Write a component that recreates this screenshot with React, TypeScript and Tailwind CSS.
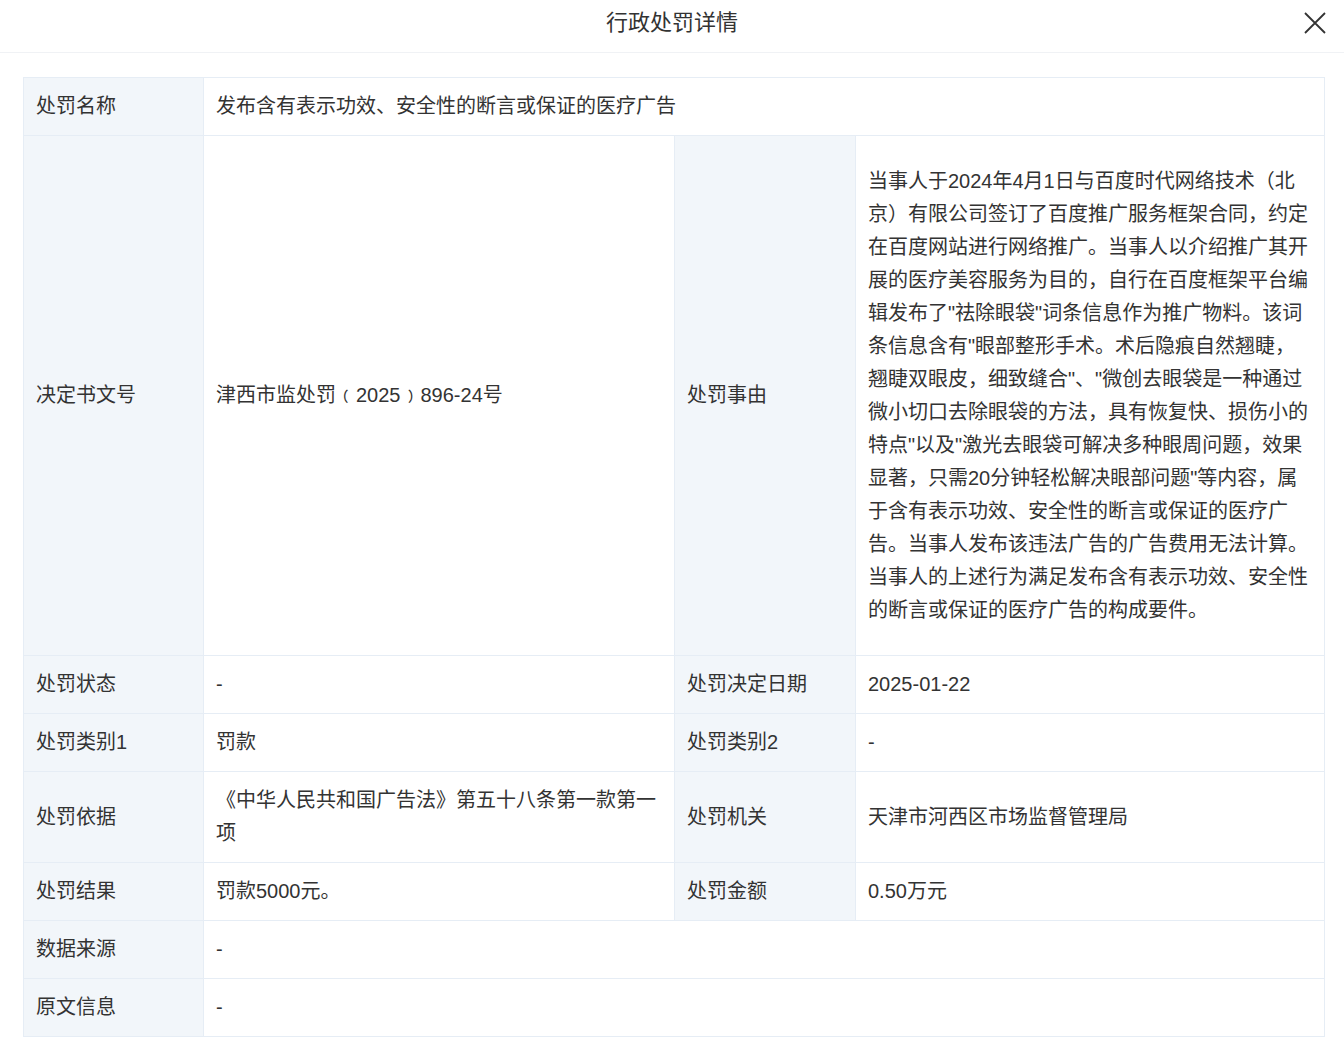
import React from "react";

const L = "bg-[#f2f6fa] px-3 border-r border-[#e6edf5] flex items-center";
const V = "px-3 flex items-center";

export default function App() {
  const row = "flex border-b border-[#e6edf5]";
  return (
    <div className="w-[1344px] h-[1050px] bg-white text-[#333] text-[20px] leading-[33px]" style={{ fontFamily: '"Liberation Sans", "Noto Sans CJK SC", sans-serif' }}>
      <div className="h-[53px] border-b border-[#f0f2f5] relative flex items-center justify-center">
        <span className="text-[22px] -mt-[8px]">行政处罚详情</span>
        <svg className="absolute right-[18px] top-[12px]" width="22" height="22" viewBox="0 0 22 22" stroke="#333" strokeWidth="1.8" fill="none"><path d="M1 1L21 21M21 1L1 21"/></svg>
      </div>
      <div className="mx-[23px] mt-[24px] w-[1302px] border border-[#e6edf5] border-b-0">
        <div className={`${row} h-[58px]`}>
          <div className={`${L} w-[180px]`}>处罚名称</div>
          <div className={V}>发布含有表示功效、安全性的断言或保证的医疗广告</div>
        </div>
        <div className={`${row} h-[520px]`}>
          <div className={`${L} w-[180px]`}>决定书文号</div>
          <div className={`${V} w-[471px] border-r border-[#e6edf5]`}>津西市监处罚﹙2025﹚896-24号</div>
          <div className={`${L} w-[181px]`}>处罚事由</div>
          <div className="pl-3 pr-[16px] flex items-center flex-1"><div>当事人于2024年4月1日与百度时代网络技术（北京）有限公司签订了百度推广服务框架合同，约定在百度网站进行网络推广。当事人以介绍推广其开展的医疗美容服务为目的，自行在百度框架平台编辑发布了"祛除眼袋"词条信息作为推广物料。该词条信息含有"眼部整形手术。术后隐痕自然翘睫，翘睫双眼皮，细致缝合"、"微创去眼袋是一种通过微小切口去除眼袋的方法，具有恢复快、损伤小的特点"以及"激光去眼袋可解决多种眼周问题，效果显著，只需20分钟轻松解决眼部问题"等内容，属于含有表示功效、安全性的断言或保证的医疗广告。当事人发布该违法广告的广告费用无法计算。当事人的上述行为满足发布含有表示功效、安全性的断言或保证的医疗广告的构成要件。</div></div>
        </div>
        {[
          ["处罚状态", "-", "处罚决定日期", "2025-01-22", 58],
          ["处罚类别1", "罚款", "处罚类别2", "-", 58],
          ["处罚依据", "《中华人民共和国广告法》第五十八条第一款第一项", "处罚机关", "天津市河西区市场监督管理局", 91],
          ["处罚结果", "罚款5000元。", "处罚金额", "0.50万元", 58],
        ].map(([a, b, c, d, h]) => (
          <div key={a as string} className={row} style={{ height: h as number }}>
            <div className={`${L} w-[180px]`}>{a}</div>
            <div className={`${V} w-[471px] border-r border-[#e6edf5]`}><div>{b}</div></div>
            <div className={`${L} w-[181px]`}>{c}</div>
            <div className={`${V} flex-1`}>{d}</div>
          </div>
        ))}
        {["数据来源", "原文信息"].map((a) => (
          <div key={a} className={`${row} h-[58px]`}>
            <div className={`${L} w-[180px]`}>{a}</div>
            <div className={V}>-</div>
          </div>
        ))}
      </div>
    </div>
  );
}
